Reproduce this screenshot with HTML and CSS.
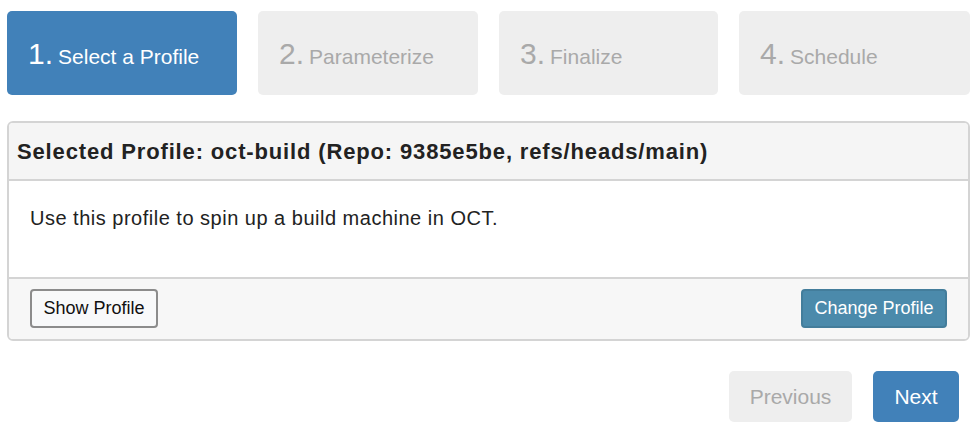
FILE: index.html
```html
<!DOCTYPE html>
<html>
<head>
<meta charset="utf-8">
<link rel="stylesheet" href="styles.css">
</head>
<body>
<div class="page">
  <div class="steps">
    <div class="step active"><span class="num">1.</span><span class="label">Select a Profile</span></div>
    <div class="step"><span class="num">2.</span><span class="label">Parameterize</span></div>
    <div class="step"><span class="num">3.</span><span class="label">Finalize</span></div>
    <div class="step"><span class="num">4.</span><span class="label">Schedule</span></div>
  </div>
  <div class="panel">
    <div class="panel-head">Selected Profile: oct-build (Repo: 9385e5be, refs/heads/main)</div>
    <div class="panel-body">Use this profile to spin up a build machine in OCT.</div>
    <div class="panel-foot">
      <button class="btn btn-default">Show Profile</button>
      <button class="btn btn-info">Change Profile</button>
    </div>
  </div>
  <div class="nav">
    <button class="nav-btn disabled">Previous</button>
    <button class="nav-btn primary">Next</button>
  </div>
</div>
</body>
</html>
```

FILE: styles.css
```css
html, body {
  margin: 0;
  padding: 0;
  background: #ffffff;
}
body {
  font-family: "Liberation Sans", Arial, Helvetica, sans-serif;
  color: #222;
}
.page {
  padding: 11px 8px 0 7px;
}
.steps {
  display: grid;
  grid-template-columns: 230px 220px 219px 231px;
  column-gap: 21px;
}
.step {
  height: 84px;
  box-sizing: border-box;
  border-radius: 5px;
  background: #eeeeee;
  color: #a9a9a9;
  display: flex;
  align-items: baseline;
  padding: 26px 0 0 21px;
}
.step.active {
  background: #4181b9;
  color: #ffffff;
}
.step .num {
  font-size: 30px;
  margin-right: 5px;
}
.step .label {
  font-size: 21px;
}
.panel {
  margin-top: 26px;
  border: 2px solid #d4d4d4;
  border-radius: 6px;
  overflow: hidden;
}
.panel-head {
  background: #f5f5f5;
  border-bottom: 2px solid #d4d4d4;
  font-weight: bold;
  font-size: 22px;
  letter-spacing: 0.85px;
  line-height: 24px;
  padding: 17px 8px 15px;
  color: #222;
}
.panel-body {
  background: #fff;
  font-size: 20px;
  letter-spacing: 0.5px;
  line-height: 22px;
  padding: 26px 21px 48px;
  color: #222;
}
.panel-foot {
  background: #f7f7f7;
  border-top: 2px solid #d4d4d4;
  display: flex;
  justify-content: space-between;
  padding: 10px 21px 11px;
}
.btn {
  font-family: "Liberation Sans", Arial, Helvetica, sans-serif;
  font-size: 18px;
  height: 39px;
  padding: 0 10px;
  border-radius: 4px;
  cursor: pointer;
}
.btn-default {
  width: 128px;
  background: #f8f9fa;
  border: 2px solid #8c8c8c;
  color: #111;
}
.btn-info {
  width: 146px;
  background: #4b8aab;
  border: 2px solid #437d9b;
  color: #ffffff;
}
.nav {
  display: flex;
  justify-content: flex-end;
  gap: 21px;
  margin-top: 30px;
  padding-right: 11px;
}
.nav-btn {
  font-family: "Liberation Sans", Arial, Helvetica, sans-serif;
  font-size: 21px;
  height: 51px;
  border: none;
  border-radius: 5px;
  padding: 0;
}
.nav-btn.disabled {
  width: 123px;
  background: #eeeeee;
  color: #a9a9a9;
}
.nav-btn.primary {
  width: 86px;
  background: #4181b9;
  color: #ffffff;
}
```
